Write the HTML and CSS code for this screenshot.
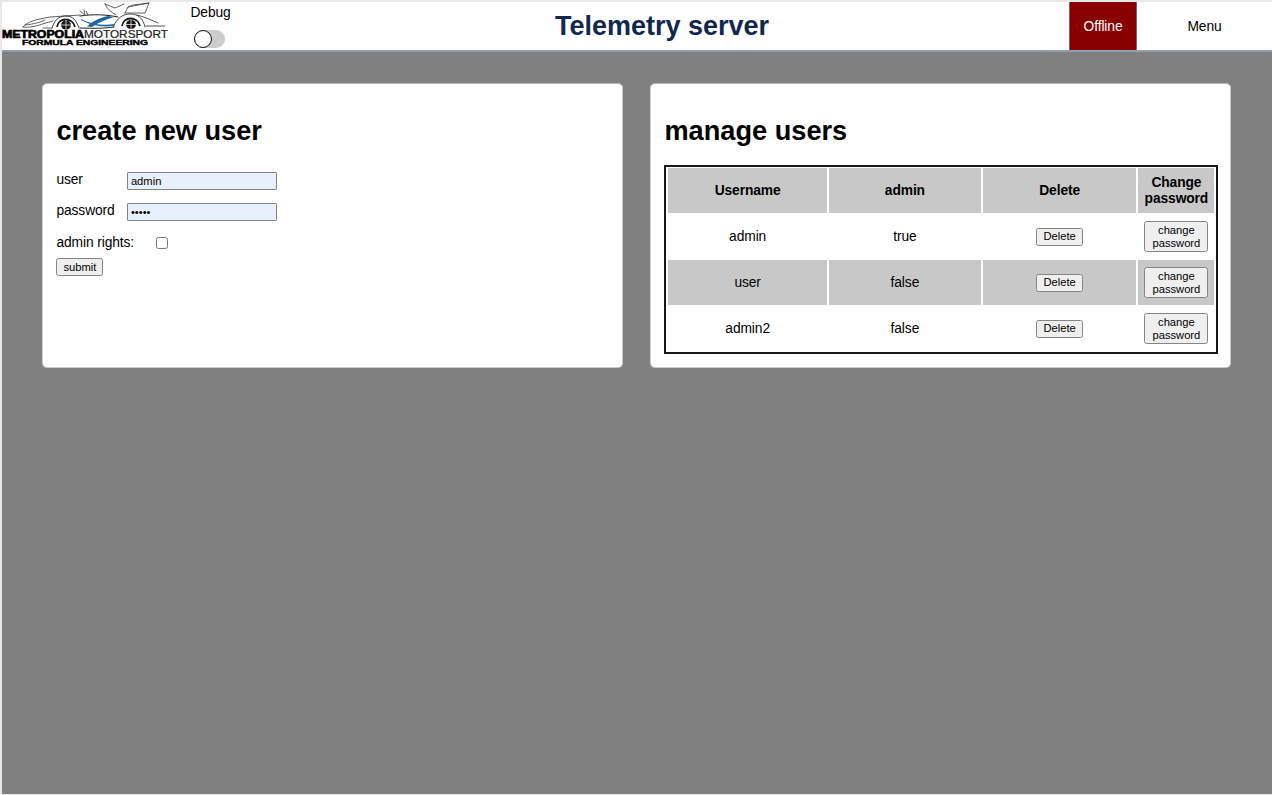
FILE: index.html
```html
<!DOCTYPE html>
<html lang="en">
<head>
<meta charset="utf-8">
<title>Telemetry server</title>
<link rel="stylesheet" href="styles.css">
</head>
<body>
<div class="app">
  <header class="topbar">
    <svg class="logo" width="168" height="46" viewBox="2 2 168 46" role="img" aria-label="Metropolia Motorsport">
      <g fill="none" stroke="#444" stroke-width=".85" stroke-linecap="round" stroke-linejoin="round">
        <path d="M23 27C26 22 37 19 50 17L80 15M23 27C29 28 37 26 44 23.500L53 21M25 25C35 24 41 22 45 20M43 28H52M80 11L85 15L84 10M86 11L88 15"/>
        <path d="M52 28C55 18 61 15.500 67 16S76 20 79 28" stroke="#222"/>
        <path d="M80 16C93 14 106 14.500 118 17M80 28C94 28.500 104 28.500 114 27" stroke="#222" stroke-width="1"/>
        <path d="M105 4C107 9 111 12 116 15M105 4L115 8L124 4M125 13L128 7L149 3L145 13H125M128 7L133 5L149 3"/>
        <path d="M113 27C117 18 123 14 130 14C138 14 143 18 145 27M137 15C145 17 151 20 158 23M146 26H165" stroke="#333"/>
      </g>
      <path d="M81 19C91 24 102 26 115 24V25.500C102 28 90 25 81 20ZM108 16L114 17C104 20 98 23 92 27L87 26.500C93 21 99 18 108 16Z" fill="#1b65a6"/>
      <path d="M57 27C58 17 73 17 75 27M122 26C123 16 138 16 140 26" fill="none" stroke="#181818" stroke-width="1.800"/>
      <ellipse class="wheel" cx="66" cy="25" rx="5" ry="4.500"/><ellipse class="wheel" cx="131" cy="24.500" rx="5" ry="4.500"/>
      <path d="M66 20V30M61 25H71M131 20V29M126 24.500H136" stroke="#fff" stroke-width=".7"/>
      <text class="logo-heavy" x="2" y="38" textLength="82" lengthAdjust="spacingAndGlyphs">METROPOLIA</text>
      <text class="logo-light" x="84" y="38" textLength="84" lengthAdjust="spacingAndGlyphs">MOTORSPORT</text>
      <text class="logo-sub" x="22" y="45" textLength="126" lengthAdjust="spacingAndGlyphs">FORMULA ENGINEERING</text>
    </svg>
    <div class="debug"><span>Debug</span><span class="toggle"></span></div>
    <h1 class="title">Telemetry server</h1>
    <div class="status">Offline</div>
    <div class="menu">Menu</div>
  </header>
  <main class="panels">
    <section class="card">
      <h1>create new user</h1>
      <form>
        <div class="field"><label for="user">user</label><input id="user" class="text" type="text" value="admin"></div>
        <div class="field"><label for="password">password</label><input id="password" class="text" type="password" value="admin"></div>
        <div class="rights"><label for="rights">admin rights:</label><input id="rights" class="check" type="checkbox"></div>
        <button class="btn" type="button">submit</button>
      </form>
    </section>
    <section class="card">
      <h1>manage users</h1>
      <table>
        <colgroup><col class="c-name"><col class="c-admin"><col class="c-delete"><col></colgroup>
        <tr><th>Username</th><th>admin</th><th>Delete</th><th>Change password</th></tr>
        <tr><td>admin</td><td>true</td><td><button class="btn">Delete</button></td><td><button class="btn wide">change password</button></td></tr>
        <tr><td>user</td><td>false</td><td><button class="btn">Delete</button></td><td><button class="btn wide">change password</button></td></tr>
        <tr><td>admin2</td><td>false</td><td><button class="btn">Delete</button></td><td><button class="btn wide">change password</button></td></tr>
      </table>
    </section>
  </main>
</div>
</body>
</html>
```
FILE: styles.css
```css
*, *::before { box-sizing: border-box; }
body {
  margin: 0;
  font: 13.8px/16px "Liberation Sans", Arial, sans-serif;
  letter-spacing: -.1px;
  color: #000;
  background: #f0f0f0;
}
.app {
  height: 795px;
  border: solid #e8e8e8;
  border-width: 2px 0 1px 2px;
  background: #808080;
  overflow: hidden;
}
.topbar {
  display: flex;
  height: 50px;
  border-bottom: 2px solid #929db0;
  background: #fff;
}
.logo { flex: none; letter-spacing: 0; }
.wheel { fill: #181818; }
.logo-heavy { font: bold 10.5px "Liberation Sans", Arial, sans-serif; stroke: #000; stroke-width: .7px; }
.logo-light { font: 10.5px "Liberation Sans", Arial, sans-serif; fill: #222; stroke: #222; stroke-width: .2px; }
.logo-sub { font: bold 7px "Liberation Sans", Arial, sans-serif; stroke: #000; stroke-width: .4px; }
.debug {
  display: flex;
  flex-direction: column;
  gap: 9px;
  width: 60px;
  padding: 3px 0 0 20.500px;
}
.toggle {
  width: 31px;
  height: 18px;
  margin-left: 3px;
  border-radius: 9px;
  background: #ccc;
}
.toggle::before {
  content: "";
  display: block;
  width: 18px;
  height: 18px;
  border: 1px solid #111;
  border-radius: 50%;
  background: #fff;
}
.title {
  flex: 1;
  margin: 0;
  padding-left: 25px;
  font-size: 27px;
  letter-spacing: 0;
  line-height: 48px;
  text-align: center;
  color: #10274e;
}
.status, .menu { line-height: 49px; text-align: center; }
.status {
  width: 68px;
  border: solid #7a6878;
  border-width: 0 1px;
  background: #880000;
  color: #fff;
}
.menu { width: 135px; }
.panels {
  display: grid;
  grid-template-columns: 581px 581px;
  gap: 27px;
  padding: 31px 0 0 40.400px;
}
.card {
  height: 284.500px;
  padding: 31px 13px 0;
  border: 1px solid #ccc;
  border-color: #b5b5b5 #ccc #ccc;
  border-radius: 5px;
  background: #fff;
}
.card h1 {
  margin: 0 0 18px;
  font-size: 27.2px;
  letter-spacing: 0;
  line-height: 32px;
}
.field {
  display: flex;
  align-items: flex-start;
  height: 31px;
  padding-top: 7px;
}
.field label { width: 70.500px; }
.text {
  width: 150px;
  height: 18px;
  padding: 1px 3px;
  border: 1px solid #858585;
  border-radius: 1px;
  background: #e8f0fe;
  font: 11.2px "Liberation Sans", Arial, sans-serif;
}
.rights {
  display: flex;
  height: 31px;
  padding-top: 8px;
}
.rights label { width: 100px; }
.check {
  appearance: none;
  width: 12px;
  height: 12px;
  margin: 2px 0 0;
  border: 1px solid #767676;
  border-radius: 2.500px;
  background: #fff;
}
.btn {
  display: inline-block;
  height: 18px;
  padding: 0 6px;
  border: 1px solid #858585;
  border-radius: 2.500px;
  background: #efefef;
  color: #000;
  font: 11.2px/13px "Liberation Sans", Arial, sans-serif;
  vertical-align: middle;
}
.wide { width: 64px; height: 31px; padding: 0 5px; }
table {
  width: 554px;
  height: 189px;
  border: 2px solid #181818;
  border-spacing: 2px 1.500px;
  table-layout: fixed;
  text-align: center;
}
.c-name { width: 158.500px; }
.c-admin { width: 152px; }
.c-delete { width: 153.500px; }
th, td { padding: 0; }
tr { height: 44.500px; }
tr:nth-child(odd) > * { background: #c8c8c8; }
```
